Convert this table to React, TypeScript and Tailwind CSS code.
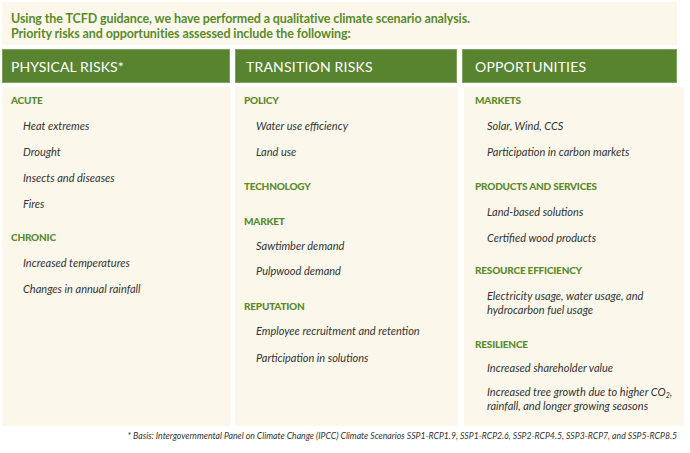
import React from "react";

type Entry = { t: string; h?: boolean; mt: string };

const col1: Entry[] = [
  { t: "ACUTE", h: true, mt: "mt-0" },
  { t: "Heat extremes", mt: "mt-[13px]" },
  { t: "Drought", mt: "mt-[12px]" },
  { t: "Insects and diseases", mt: "mt-[12px]" },
  { t: "Fires", mt: "mt-[12px]" },
  { t: "CHRONIC", h: true, mt: "mt-[20px]" },
  { t: "Increased temperatures", mt: "mt-[13px]" },
  { t: "Changes in annual rainfall", mt: "mt-[12px]" },
];

const col2: Entry[] = [
  { t: "POLICY", h: true, mt: "mt-0" },
  { t: "Water use efficiency", mt: "mt-[13px]" },
  { t: "Land use", mt: "mt-[12px]" },
  { t: "TECHNOLOGY", h: true, mt: "mt-[21px]" },
  { t: "MARKET", h: true, mt: "mt-[23px]" },
  { t: "Sawtimber demand", mt: "mt-[12px]" },
  { t: "Pulpwood demand", mt: "mt-[11px]" },
  { t: "REPUTATION", h: true, mt: "mt-[22px]" },
  { t: "Employee recruitment and retention", mt: "mt-[12px]" },
  { t: "Participation in solutions", mt: "mt-[13px]" },
];

const itemCls = "pl-[12px] text-[11px] leading-[14px] italic text-[#333333]";
const headCls = "text-[10px] leading-[12px] font-black tracking-[-0.2px] text-[#5a8a2b]";

function render(list: Entry[]) {
  return list.map((e, i) =>
    e.h ? (
      <div key={i} className={`${e.mt} ${headCls}`}>
        {e.t}
      </div>
    ) : (
      <div key={i} className={`${e.mt} ${itemCls}`}>
        {e.t}
      </div>
    )
  );
}

export default function App() {
  return (
    <div
      className="w-[690px] h-[453px] bg-white pt-[2px] pl-[2px]"
      style={{ fontFamily: "Lato, 'Noto Sans', sans-serif" }}
    >
      <div className="w-[675px] h-[43px] bg-[#fbf8eb] pl-[9px] pt-[9px] text-[12.5px] leading-[15px] font-bold text-[#5a8a2b] tracking-[-0.1px]">
        <div>Using the TCFD guidance, we have performed a qualitative climate scenario analysis.</div>
        <div>Priority risks and opportunities assessed include the following:</div>
      </div>
      <div className="flex mt-[4px] h-[34px]">
        <div className="w-[228px] mr-[5px] bg-[#58842f] border border-[#7fa05e] flex items-center pl-[8px] text-white text-[14px] tracking-[0.1px]">
          PHYSICAL RISKS*
        </div>
        <div className="w-[222px] mr-[5px] bg-[#58842f] border border-[#7fa05e] flex items-center pl-[10px] text-white text-[14px] tracking-[0.2px]">
          TRANSITION RISKS
        </div>
        <div className="w-[215px] bg-[#58842f] border border-[#7fa05e] flex items-center pl-[12px] text-white text-[14px] tracking-[0.2px]">
          OPPORTUNITIES
        </div>
      </div>
      <div className="flex mt-[4px]">
        <div className="w-[229px] mr-[4px] h-[339px] bg-[#fbf8eb] pt-[7px] pl-[9px]">{render(col1)}</div>
        <div className="w-[223px] mr-[6px] h-[339px] bg-[#fbf8eb] pt-[7px] pl-[9px]">{render(col2)}</div>
        <div className="w-[220px] h-[339px] bg-[#fbf8eb] pt-[7px] pl-[11px]">
          <div className={headCls}>MARKETS</div>
          <div className={`mt-[13px] ${itemCls}`}>Solar, Wind, CCS</div>
          <div className={`mt-[12px] ${itemCls}`}>Participation in carbon markets</div>
          <div className={`mt-[21px] ${headCls}`}>PRODUCTS AND SERVICES</div>
          <div className={`mt-[13px] ${itemCls}`}>Land-based solutions</div>
          <div className={`mt-[12px] ${itemCls}`}>Certified wood products</div>
          <div className={`mt-[19px] ${headCls}`}>RESOURCE EFFICIENCY</div>
          <div className={`mt-[13px] ${itemCls}`}>
            Electricity usage, water usage, and
            <br />
            hydrocarbon fuel usage
          </div>
          <div className={`mt-[21px] ${headCls}`}>RESILIENCE</div>
          <div className={`mt-[11px] ${itemCls}`}>Increased shareholder value</div>
          <div className={`mt-[10px] ${itemCls}`}>
            Increased tree growth due to higher CO<sub className="text-[7px]">2</sub>,
            <br />
            rainfall, and longer growing seasons
          </div>
        </div>
      </div>
      <div className="w-[675px] mt-[5px] text-right text-[8.7px] leading-[10px] italic text-[#333333]">
        * Basis: Intergovernmental Panel on Climate Change (IPCC) Climate Scenarios SSP1-RCP1.9, SSP1-RCP2.6, SSP2-RCP4.5, SSP3-RCP7, and SSP5-RCP8.5
      </div>
    </div>
  );
}
